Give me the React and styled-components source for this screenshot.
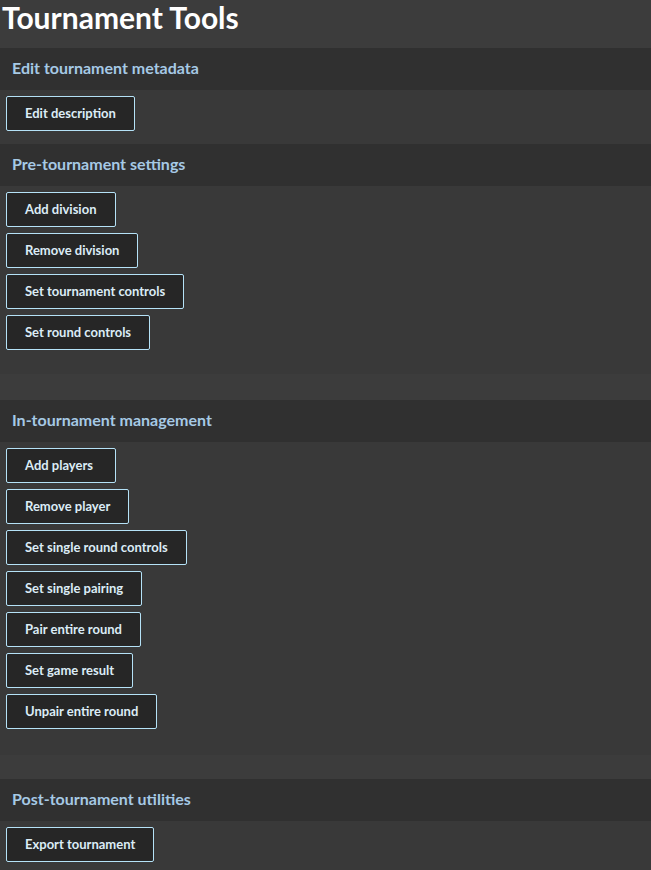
import React from "react";
import styled, { createGlobalStyle } from "styled-components";

const Global = createGlobalStyle`
  html, body { margin: 0; padding: 0; background: #3c3c3c; }
  body { font-family: "Lato", "Noto Sans", sans-serif; }
  * { box-sizing: border-box; }
`;

const Page = styled.div`
  width: 651px;
  min-height: 870px;
  background: #3c3c3c;
  display: flex;
  flex-direction: column;
`;

const Title = styled.h1`
  margin: 0;
  padding: 0 0 0 2px;
  height: 48px;
  font-size: 30px;
  line-height: 34px;
  font-weight: 700;
  color: #ffffff;
`;

const Section = styled.section`
  display: flex;
  flex-direction: column;
  margin-bottom: ${(p) => p.$gapAfter || 0}px;
`;

const Header = styled.h2`
  margin: 0;
  height: 42px;
  padding: 0 12px 3px 12px;
  display: flex;
  align-items: center;
  background: #303030;
  color: #a6c9e5;
  font-size: 16px;
  font-weight: 700;
`;

const Body = styled.div`
  background: #393939;
  display: flex;
  flex-direction: column;
  align-items: flex-start;
  gap: 6px;
  padding: 6px 6px ${(p) => p.$padBottom}px 6px;
`;

const Button = styled.button`
  height: 35px;
  min-width: 110px;
  padding: 0 18px 1px 18px;
  background: #262626;
  border: 1px solid #b5e2f7;
  border-radius: 2px;
  color: #dcecf6;
  font-family: "Lato", "Noto Sans", sans-serif;
  font-size: 13px;
  font-weight: 700;
  text-align: left;
  cursor: pointer;
`;

const sections = [
  {
    title: "Edit tournament metadata",
    pad: 13,
    gap: 0,
    buttons: ["Edit description"],
  },
  {
    title: "Pre-tournament settings",
    pad: 24,
    gap: 26,
    buttons: [
      "Add division",
      "Remove division",
      "Set tournament controls",
      "Set round controls",
    ],
  },
  {
    title: "In-tournament management",
    pad: 26,
    gap: 24,
    buttons: [
      "Add players",
      "Remove player",
      "Set single round controls",
      "Set single pairing",
      "Pair entire round",
      "Set game result",
      "Unpair entire round",
    ],
  },
  {
    title: "Post-tournament utilities",
    pad: 13,
    gap: 0,
    buttons: ["Export tournament"],
  },
];

export default function App() {
  return (
    <Page>
      <Global />
      <Title>Tournament Tools</Title>
      {sections.map((s) => (
        <Section key={s.title} $gapAfter={s.gap}>
          <Header>{s.title}</Header>
          <Body $padBottom={s.pad}>
            {s.buttons.map((b) => (
              <Button key={b}>{b}</Button>
            ))}
          </Body>
        </Section>
      ))}
    </Page>
  );
}
